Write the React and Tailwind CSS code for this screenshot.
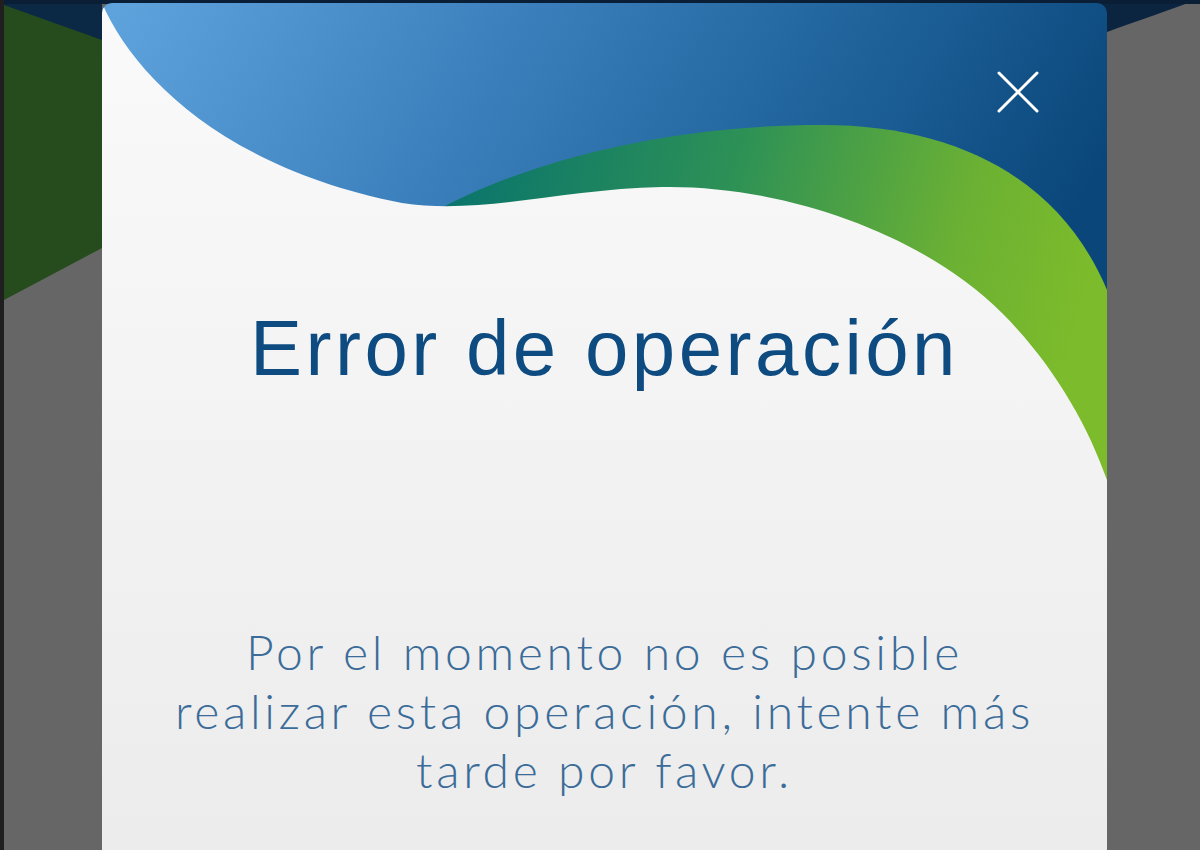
// fondo oscuro detrás del modal
function Backdrop() {
  return (
    <svg
      className="absolute inset-0"
      width="1200"
      height="850"
      viewBox="0 0 1200 850"
    >
      <rect width="1200" height="850" fill="#666666" />
      <rect width="4" height="850" fill="#1f1f1f" />
      <path d="M4 0 H102 V248 L4 300 Z" fill="#264c1d" />
      <path d="M4 0 H102 V40 L4 5 Z" fill="#0b2844" />
      <path d="M1100 0 H1200 L1196 0 C1170 10 1140 20 1107 32 Z" fill="#0b2540" />
      <rect x="4" width="1196" height="4" fill="#0a1f36" />
    </svg>
  );
}

// ondas azul y verde de la cabecera
function Waves() {
  return (
    <svg
      className="absolute inset-0"
      width="1005"
      height="900"
      viewBox="0 0 1005 900"
    >
      <defs>
        <linearGradient id="azul" x1="0" y1="0" x2="1" y2="0.3">
          <stop offset="0" stopColor="#5fa4dd" />
          <stop offset="0.4" stopColor="#3a7fbb" />
          <stop offset="0.75" stopColor="#1c5f97" />
          <stop offset="1" stopColor="#0a4679" />
        </linearGradient>
        <linearGradient id="verde" x1="0" y1="0" x2="1" y2="0.2">
          <stop offset="0" stopColor="#06716f" />
          <stop offset="0.45" stopColor="#2d9156" />
          <stop offset="0.8" stopColor="#6cb133" />
          <stop offset="1" stopColor="#7cbb2b" />
        </linearGradient>
        <linearGradient id="blanco" x1="0" y1="0" x2="0" y2="1">
          <stop offset="0" stopColor="#fafafa" />
          <stop offset="1" stopColor="#ebebeb" />
        </linearGradient>
      </defs>
      <rect width="1005" height="520" fill="url(#azul)" />
      <path
        d="M330 210 C420 160 560 122 720 122 C860 122 960 180 1005 287 V600 H330 Z"
        fill="url(#verde)"
      />
      <path
        d="M0 0 C30 70 120 165 300 200 C380 212 460 186 560 184 C680 182 820 230 900 310 C950 360 985 420 1005 477 V900 H0 Z"
        fill="url(#blanco)"
      />
    </svg>
  );
}

function CloseIcon() {
  return (
    <svg width="42" height="42" viewBox="0 0 42 42" fill="none">
      <path
        d="M2 2 L40 40 M40 2 L2 40"
        stroke="white"
        strokeWidth="3"
        strokeLinecap="round"
      />
    </svg>
  );
}

export default function App() {
  return (
    <div className="relative w-[1200px] h-[850px] overflow-hidden bg-[#666666]">
      <Backdrop />

      {/* modal */}
      <div className="relative ml-[102px] mt-[3px] w-[1005px] h-[900px] rounded-t-[10px] overflow-hidden">
        <Waves />

        <button className="absolute top-[68px] right-[68px] w-[42px] h-[42px] flex items-center justify-center">
          <CloseIcon />
        </button>

        <div className="relative flex flex-col items-center pt-[306px]">
          <h1 className="font-['Liberation_Sans',Arial,sans-serif] text-[78px] leading-none tracking-[3.5px] text-[#0d4b80]">
            Error de operación
          </h1>
          <p className="mt-[235px] text-center font-['Lato',sans-serif] font-light text-[48px] leading-[59px] tracking-[3.7px] text-[#3b6c99]">
            Por el momento no es posible
            <br />
            realizar esta operación, intente más
            <br />
            tarde por favor.
          </p>
        </div>
      </div>
    </div>
  );
}
